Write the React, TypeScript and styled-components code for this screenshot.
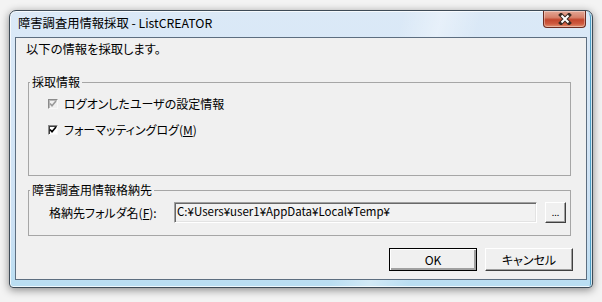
import { createGlobalStyle, styled } from "styled-components";

const GlobalStyle = createGlobalStyle`
  html, body {
    margin: 0;
    padding: 0;
    background: #f3f3f3;
  }
  body {
    font-family: "Noto Sans CJK JP", "Liberation Sans", sans-serif;
    font-size: 12px;
    color: #000;
  }
`;

const App = () => {
  return (
    <>
      <GlobalStyle />
      <Page>
        <Window>
          <TitleBar>
            <Title>障害調査用情報採取 - ListCREATOR</Title>
            <CloseButton>
              <svg width="18" height="12" viewBox="0 0 18 12">
                <path d="M5 2 L13 10 M13 2 L5 10" stroke="#3a2a22" strokeWidth="4" strokeLinecap="square" />
                <path d="M5.5 2.5 L12.5 9.5 M12.5 2.5 L5.5 9.5" stroke="#ffffff" strokeWidth="2" />
              </svg>
            </CloseButton>
          </TitleBar>

          <Client>
            <Message>以下の情報を採取します。</Message>

            <GroupBox $height={101}>
              <Legend>採取情報</Legend>
              <CheckList>
                <CheckRow>
                  <CheckBox $disabled>
                    <svg width="8" height="8" viewBox="0 0 8 8">
                      <path d="M1 3.5 L3 5.8 L7 1" fill="none" stroke="#9a9a9a" strokeWidth="1.6" />
                    </svg>
                  </CheckBox>
                  <span>ログオンしたユーザの設定情報</span>
                </CheckRow>
                <CheckRow>
                  <CheckBox>
                    <svg width="8" height="8" viewBox="0 0 8 8">
                      <path d="M1 3.5 L3 5.8 L7 1" fill="none" stroke="#000" strokeWidth="1.7" />
                    </svg>
                  </CheckBox>
                  <span>
                    フォーマッティングログ(<u>M</u>)
                  </span>
                </CheckRow>
              </CheckList>
            </GroupBox>

            <GroupBox $height={53}>
              <Legend>障害調査用情報格納先</Legend>
              <FolderRow>
                <FieldLabel>
                  格納先フォルダ名(<u>F</u>):
                </FieldLabel>
                <PathField>C:¥Users¥user1¥AppData¥Local¥Temp¥</PathField>
                <BrowseButton>...</BrowseButton>
              </FolderRow>
            </GroupBox>

            <ButtonRow>
              <PushButton $default>OK</PushButton>
              <PushButton>キャンセル</PushButton>
            </ButtonRow>
          </Client>
        </Window>
      </Page>
    </>
  );
};

const Page = styled.div`
  width: 602px;
  height: 302px;
  box-sizing: border-box;
  padding: 10px 9px 0 9px;
`;

const Window = styled.div`
  width: 584px;
  height: 278px;
  box-sizing: border-box;
  display: flex;
  flex-direction: column;
  border: 1px solid #3e4b57;
  border-radius: 7px 7px 4px 4px;
  background:
    linear-gradient(105deg, rgba(255,255,255,0) 60%, rgba(255,255,255,0.35) 66%, rgba(255,255,255,0) 72%),
    linear-gradient(to bottom, #dbe9f7 0%, #d5e6f6 40%, #cbe0f3 80%, #b9def2 100%);
  box-shadow:
    inset 0 0 0 1px rgba(255,255,255,0.75),
    inset -3px 0 0 -1px #4c9cc4,
    0 2px 9px rgba(0,0,0,0.45);
`;

const TitleBar = styled.div`
  height: 26px;
  display: flex;
  align-items: flex-start;
  justify-content: space-between;
  padding: 0 6px 0 8px;
`;

const Title = styled.span`
  font-size: 12.3px;
  line-height: 20px;
  padding-top: 2px;
  font-feature-settings: "palt";
`;

const CloseButton = styled.div`
  width: 43px;
  height: 17px;
  box-sizing: border-box;
  display: flex;
  align-items: center;
  justify-content: center;
  border: 1px solid #6b2b20;
  border-top: none;
  border-radius: 0 0 4px 4px;
  background: linear-gradient(to bottom, #e3a796 0%, #d6816b 40%, #c2462d 55%, #cf5a3f 80%, #e19272 100%);
  box-shadow: inset 0 0 0 1px rgba(255,255,255,0.35);
`;

const Client = styled.div`
  flex: 1;
  margin: 0 5px 7px 5px;
  display: flex;
  flex-direction: column;
  border: 1px solid #5d6e80;
  background: #f0f0f0;
  padding: 4px 0 8px 0;
`;

const Message = styled.div`
  line-height: 14px;
  padding-left: 10px;
  font-size: 12.3px;
  font-feature-settings: "palt";
`;

const GroupBox = styled.fieldset<{ $height: number }>`
  height: ${(p) => p.$height}px;
  box-sizing: border-box;
  margin: 0 15px 0 12px;
  padding: 0;
  border: 1px solid #a6a6a6;
  min-inline-size: 0;

  & + & {
    margin-top: 7px;
  }

  ${Message} + & {
    margin-top: 19px;
  }
`;

const Legend = styled.legend`
  padding: 0 2px;
  margin-left: 1px;
  line-height: 14px;
  font-feature-settings: "palt";
`;

const CheckList = styled.div`
  display: flex;
  flex-direction: column;
  gap: 10px;
  padding: 7px 0 0 19px;
`;

const CheckRow = styled.label`
  display: flex;
  align-items: center;
  gap: 6px;
  line-height: 16px;
  font-feature-settings: "palt";
  color: #000;

  & u {
    text-underline-offset: 1px;
  }
`;

const CheckBox = styled.span<{ $disabled?: boolean }>`
  width: 10px;
  height: 10px;
  box-sizing: border-box;
  display: flex;
  align-items: center;
  justify-content: center;
  border: 1px solid;
  border-color: #8a8a8a #f8f8f8 #f8f8f8 #8a8a8a;
  box-shadow: inset 1px 1px 0 ${(p) => (p.$disabled ? "#b8b8b8" : "#404040")};
  background: ${(p) => (p.$disabled ? "#f0f0f0" : "#ffffff")};
`;

const FolderRow = styled.div`
  display: flex;
  align-items: center;
  padding: 5px 0 0 20px;
`;

const FieldLabel = styled.span`
  width: 125px;
  line-height: 16px;
  font-feature-settings: "palt";
`;

const PathField = styled.div`
  width: 363px;
  height: 21px;
  box-sizing: border-box;
  padding: 0 2px;
  line-height: 17px;
  font-size: 11.5px;
  border: 1px solid;
  border-color: #a0a0a0 #ffffff #ffffff #a0a0a0;
  box-shadow: inset 1px 1px 0 #696969, inset -1px -1px 0 #e3e3e3;
  background: #f2f2f2;
  white-space: nowrap;
  overflow: hidden;
`;

const BrowseButton = styled.div`
  width: 21px;
  height: 21px;
  margin-left: 8px;
  box-sizing: border-box;
  display: flex;
  align-items: flex-end;
  justify-content: center;
  font-size: 9px;
  line-height: 12px;
  padding-bottom: 3px;
  border: 1px solid;
  border-color: #ffffff #404040 #404040 #ffffff;
  box-shadow: inset -1px -1px 0 #a0a0a0;
  background: #f0f0f0;
`;

const ButtonRow = styled.div`
  display: flex;
  justify-content: flex-end;
  gap: 8px;
  margin-top: auto;
  padding-right: 13px;
`;

const PushButton = styled.div<{ $default?: boolean }>`
  width: 88px;
  height: 23px;
  box-sizing: border-box;
  display: flex;
  align-items: center;
  justify-content: center;
  font-feature-settings: "palt";
  background: #f0f0f0;
  border: 1px solid;
  border-color: ${(p) => (p.$default ? "#000" : "#ffffff #404040 #404040 #ffffff")};
  box-shadow: ${(p) =>
    p.$default
      ? "inset 1px 1px 0 #ffffff, inset -2px -2px 0 #a0a0a0, inset -1px -1px 0 #404040"
      : "inset -1px -1px 0 #a0a0a0"};
`;

export default App;
